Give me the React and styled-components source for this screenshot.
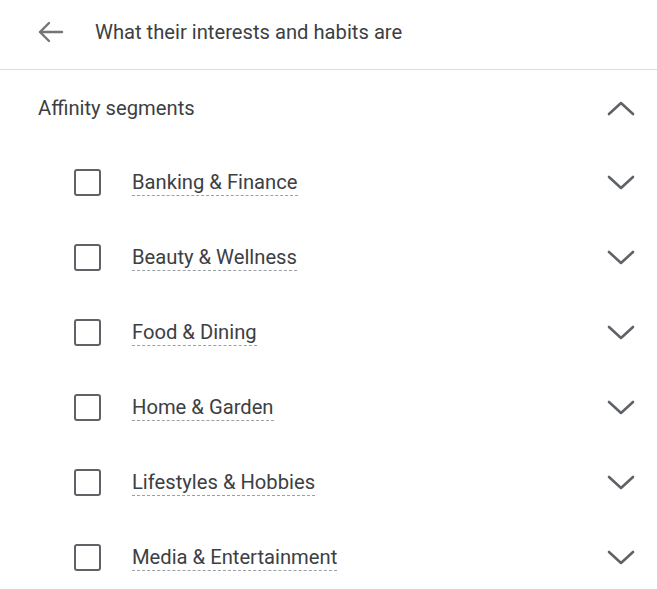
import React from "react";
import styled, { createGlobalStyle } from "styled-components";

const Global = createGlobalStyle`
  html, body { margin: 0; padding: 0; background: #fff; }
  body { font-family: Roboto, "Noto Sans", Arial, sans-serif; color: #3c4043; }
`;

const Page = styled.div`
  width: 657px;
  height: 589px;
  background: #fff;
  overflow: hidden;
`;

const Header = styled.div`
  height: 70px;
  display: flex;
  align-items: center;
  padding-left: 36px;
  gap: 31px;
  border-bottom: 1px solid #dadce0;
  box-sizing: border-box;
`;

const Title = styled.div`
  font-size: 20.2px;
  color: #3c4043;
  margin-top: -6px;
`;

const IconSlot = styled.div`
  display: flex;
  align-items: center;
  margin-top: -5px;
`;

const Section = styled.div`
  display: flex;
  align-items: center;
  justify-content: space-between;
  padding: 0 22px 0 38px;
  height: 75px;
`;

const SectionTitle = styled.div`
  font-size: 20.2px;
  color: #3c4043;
`;

const List = styled.div`
  display: flex;
  flex-direction: column;
`;

const Row = styled.div`
  height: 75px;
  display: flex;
  align-items: center;
  padding: 0 22px 0 74px;
`;

const Box = styled.div`
  width: 27px;
  height: 27px;
  box-sizing: border-box;
  border: 2.5px solid #5f6368;
  border-radius: 3px;
  flex: none;
`;

const Label = styled.span`
  margin-left: 31px;
  margin-top: 2px;
  font-size: 20.2px;
  color: #3c4043;
  padding-bottom: 1px;
  border-bottom: 1px dashed #9aa0a6;
  line-height: 23px;
`;

const Spacer = styled.div`
  flex: 1;
`;

const Chevron = ({ up }) => (
  <svg width="28" height="16" viewBox="0 0 28 16" fill="none">
    <path
      d={up ? "M2 14 L14 3 L26 14" : "M2 2 L14 13 L26 2"}
      stroke="#5f6368"
      strokeWidth="2.6"
      strokeLinecap="round"
      strokeLinejoin="round"
    />
  </svg>
);

const BackArrow = () => (
  <svg width="28" height="24" viewBox="0 0 28 24" fill="none">
    <path
      d="M26 12 H4 M13 3 L4 12 L13 21"
      stroke="#757575"
      strokeWidth="2.4"
      strokeLinecap="round"
      strokeLinejoin="round"
    />
  </svg>
);

const items = [
  "Banking & Finance",
  "Beauty & Wellness",
  "Food & Dining",
  "Home & Garden",
  "Lifestyles & Hobbies",
  "Media & Entertainment",
];

export default function App() {
  return (
    <Page>
      <Global />
      <Header>
        <IconSlot>
          <BackArrow />
        </IconSlot>
        <Title>What their interests and habits are</Title>
      </Header>
      <Section>
        <SectionTitle>Affinity segments</SectionTitle>
        <Chevron up />
      </Section>
      <List>
        {items.map((t) => (
          <Row key={t}>
            <Box />
            <Label>{t}</Label>
            <Spacer />
            <Chevron />
          </Row>
        ))}
      </List>
    </Page>
  );
}
